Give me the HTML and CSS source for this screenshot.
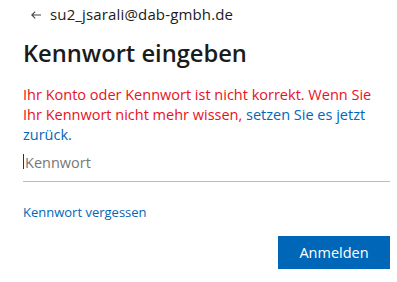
FILE: index.html
```html
<!DOCTYPE html>
<html lang="de">
<head>
<meta charset="utf-8">
<link rel="stylesheet" href="styles.css">
</head>
<body>
<main class="card">
  <div class="identity">
    <svg class="back" width="10" height="8" viewBox="0 0 10 8" aria-hidden="true"><path d="M10 4H1M4.2 0.6L0.8 4L4.2 7.4" fill="none" stroke="#444" stroke-width="1.1"/></svg>
    <span class="email">su2_jsarali@dab-gmbh.de</span>
  </div>
  <h1 class="title">Kennwort eingeben</h1>
  <p class="error">Ihr Konto oder Kennwort ist nicht korrekt. Wenn Sie Ihr Kennwort nicht mehr wissen, <a class="link" href="#">setzen Sie es jetzt</a> <a class="link" href="#">zurück.</a></p>
  <div class="field">
    <span class="caret"></span>
    <span class="placeholder">Kennwort</span>
  </div>
  <div class="forgot"><a class="link" href="#">Kennwort vergessen</a></div>
  <div class="actions">
    <button class="btn" type="button">Anmelden</button>
  </div>
</main>
</body>
</html>
```
FILE: styles.css
```css
html, body {
  margin: 0;
  padding: 0;
  background: #fff;
}
body {
  font-family: "Open Sans", "Noto Sans", sans-serif;
  color: #1b1b1b;
  width: 397px;
  height: 282px;
  overflow: hidden;
}
.card {
  padding: 4px 7px 0 23px;
}
.identity {
  display: flex;
  align-items: center;
  gap: 9px;
  height: 20px;
  font-size: 15px;
  letter-spacing: 0.15px;
  color: #1b1b1b;
}
.back {
  margin-left: 8px;
  margin-top: 1px;
}
.title {
  margin: 13px 0 0;
  font-size: 23.7px;
  font-weight: 600;
  line-height: 32px;
  color: #1b1b1b;
}
.error {
  margin: 16px 0 0;
  font-size: 14.5px;
  line-height: 20px;
  color: #e81123;
}
.link {
  color: #0067b8;
  text-decoration: none;
}
.field {
  margin-top: 1px;
  box-sizing: border-box;
  display: flex;
  align-items: flex-end;
  height: 36px;
  padding-bottom: 8px;
  border-bottom: 1px solid #f4a2a8;
  font-size: 14.5px;
  line-height: 20px;
}
.caret {
  width: 1px;
  height: 15px;
  background: #333;
  margin-bottom: 4px;
  margin-right: 1px;
}
.placeholder {
  color: #777;
}
.forgot {
  margin-top: 21px;
  font-size: 13px;
  line-height: 18px;
}
.actions {
  display: flex;
  justify-content: flex-end;
  margin-top: 15px;
}
.btn {
  width: 112px;
  height: 33px;
  border: none;
  background: #0067b8;
  color: #fff;
  font-family: inherit;
  font-size: 14.5px;
  padding: 0;
}
```
